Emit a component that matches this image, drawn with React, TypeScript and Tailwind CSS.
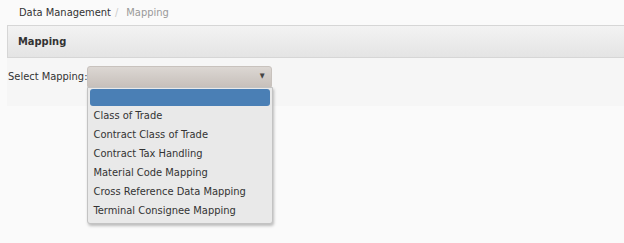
import React from "react";

const items = [
  "Class of Trade",
  "Contract Class of Trade",
  "Contract Tax Handling",
  "Material Code Mapping",
  "Cross Reference Data Mapping",
  "Terminal Consignee Mapping",
];

export default function App() {
  return (
    <div
      className="w-[624px] h-[243px] bg-[#fafafa] text-[#333] text-[11px] overflow-hidden"
      style={{ fontFamily: '"DejaVu Sans Condensed", "DejaVu Sans", sans-serif' }}
    >
      <div className="h-[25px] flex items-center pl-[19px] text-[11px] leading-none">
        <span className="text-[#333]">Data Management</span>
        <span className="text-[#ccc] px-[4px]">/</span>
        <span className="text-[#999] pl-[4px]">Mapping</span>
      </div>
      <div className="ml-[7px] h-[33px] border border-r-0 border-[#d6d6d6] bg-gradient-to-b from-[#f3f3f3] to-[#e4e4e4] flex items-center pl-[10px] pt-[1px] font-bold text-[#333]">
        Mapping
      </div>
      <div className="ml-[7px] h-[48px] bg-[#f6f6f6] relative">
        <div className="flex items-start pt-[8px] pl-[1px]">
          <span className="leading-[21px]">Select Mapping:</span>
          <div className="relative -ml-[1px]">
            <div className="w-[185px] h-[21px] rounded-t-[3px] border border-[#c8c2bd] bg-gradient-to-b from-[#dcd7d3] to-[#c8c1bc] flex items-center justify-end pr-[6px]">
              <span className="text-[7px] text-[#444]">▼</span>
            </div>
            <div className="absolute left-0 top-[21px] w-[186px] bg-[#e9e9e9] border border-[#c3c3c3] rounded-b-[3px] shadow-[1px_2px_3px_rgba(0,0,0,0.25)] px-[2px] pt-[1px] pb-[3px] z-10">
              <div className="h-[17px] rounded-[3px] bg-[#4a7fb5]" />
              {items.map((t) => (
                <div key={t} className="h-[19px] flex items-center pl-[4px] pt-[1px] text-[#333]">
                  {t}
                </div>
              ))}
            </div>
          </div>
        </div>
      </div>
    </div>
  );
}
